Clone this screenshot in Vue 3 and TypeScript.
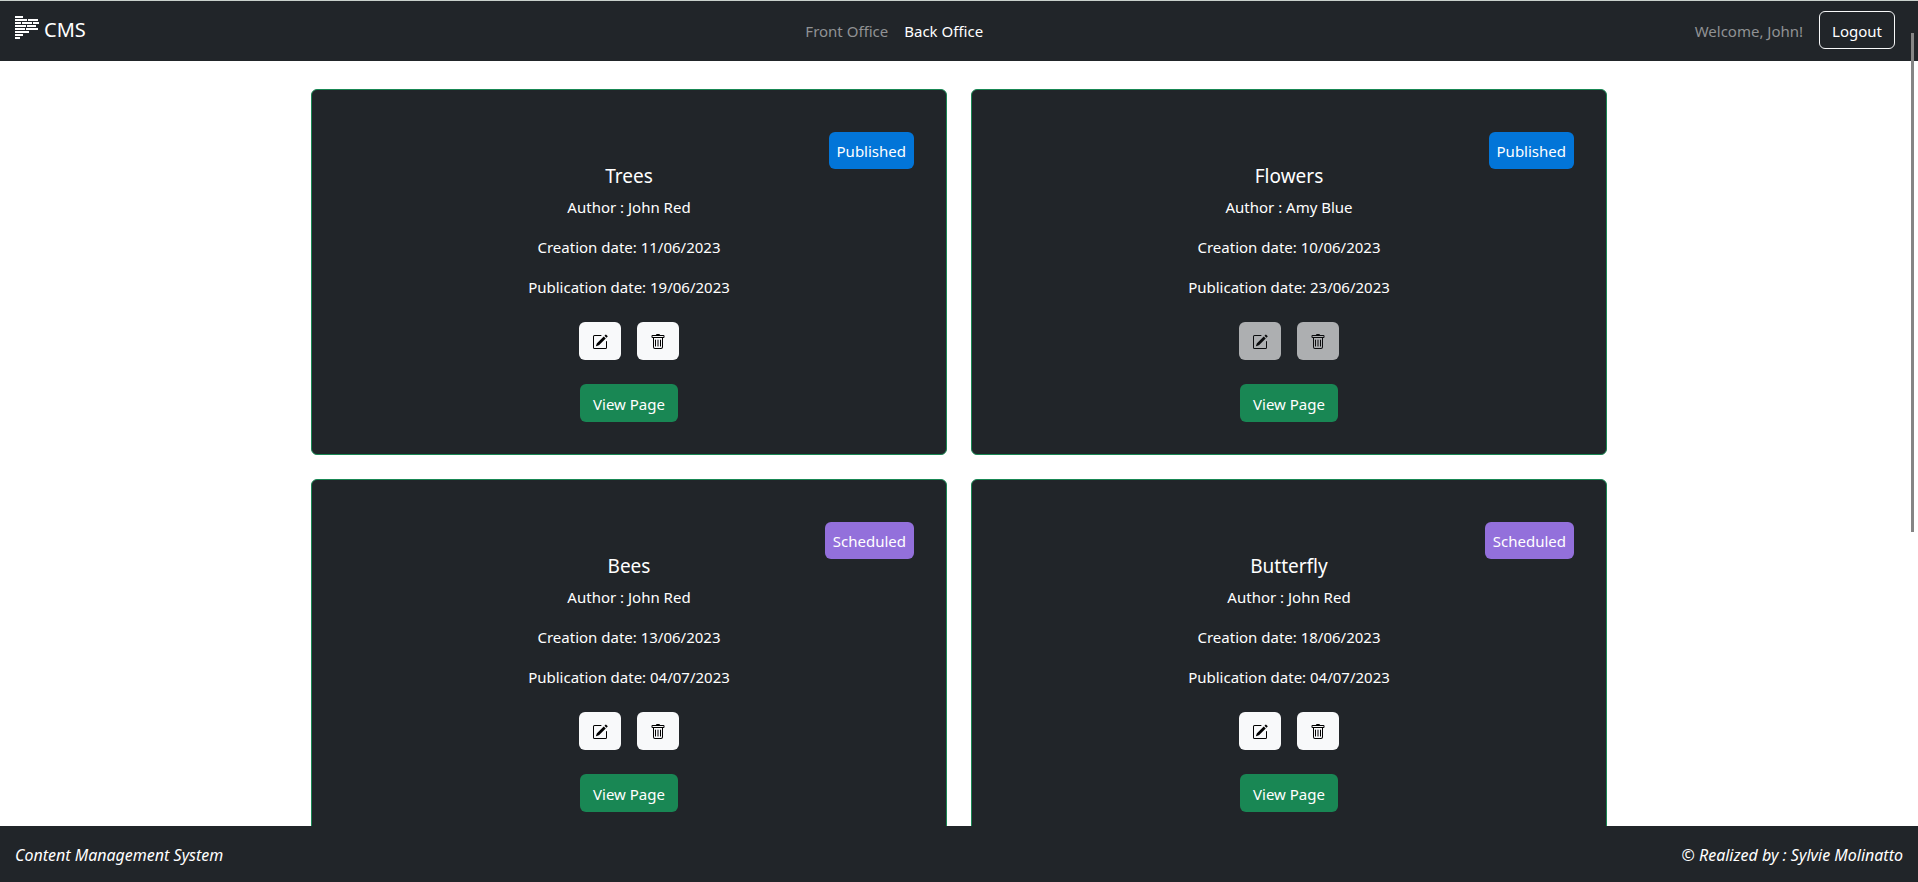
<script setup lang="ts">
interface PageCard {
  title: string
  author: string
  created: string
  published: string
  status: 'Published' | 'Scheduled'
  editable: boolean
}

const pages: PageCard[] = [
  { title: 'Trees', author: 'John Red', created: '11/06/2023', published: '19/06/2023', status: 'Published', editable: true },
  { title: 'Flowers', author: 'Amy Blue', created: '10/06/2023', published: '23/06/2023', status: 'Published', editable: false },
  { title: 'Bees', author: 'John Red', created: '13/06/2023', published: '04/07/2023', status: 'Scheduled', editable: true },
  { title: 'Butterfly', author: 'John Red', created: '18/06/2023', published: '04/07/2023', status: 'Scheduled', editable: true },
]
</script>

<template>
  <div class="app">
    <header class="navbar">
      <a class="brand" href="#">
        <svg class="logo" viewBox="0 0 24 24" aria-hidden="true">
          <path d="M0 0h8v2H0zM0 3h12v2H0zM13 3h10v2H13zM0 6h6v2H0zM7 6h10v2H7zM18 6h6v2h-6zM0 9h11v2H0zM12 9h9v2h-9zM0 12h10v2H0zM11 12h12v2H11zM0 15h14v2H0zM0 18h8v2H0zM0 21h5v2H0z" />
        </svg>
        <span>CMS</span>
      </a>
      <nav class="links">
        <a class="link" href="#front">Front Office</a>
        <a class="link active" href="#back">Back Office</a>
      </nav>
      <div class="user">
        <span class="welcome">Welcome, John!</span>
        <button class="btn logout" type="button">Logout</button>
      </div>
    </header>

    <main class="content">
      <div class="grid">
        <article v-for="page in pages" :key="page.title" class="card">
          <span class="badge" :class="page.status.toLowerCase()">{{ page.status }}</span>
          <h2 class="title">{{ page.title }}</h2>
          <p>Author : {{ page.author }}</p>
          <p>Creation date: {{ page.created }}</p>
          <p>Publication date: {{ page.published }}</p>
          <div class="actions">
            <button class="btn icon-btn" type="button" aria-label="Edit" :disabled="!page.editable">
              <svg viewBox="0 0 16 16" aria-hidden="true">
                <path d="M15.502 1.94a.5.5 0 0 1 0 .706L14.459 3.69l-2-2L13.502.646a.5.5 0 0 1 .707 0l1.293 1.293zm-1.75 2.456-2-2L4.939 9.21a.5.5 0 0 0-.121.196l-.805 2.414a.25.25 0 0 0 .316.316l2.414-.805a.5.5 0 0 0 .196-.12l6.813-6.814z" />
                <path fill-rule="evenodd" d="M1 13.5A1.5 1.5 0 0 0 2.5 15h11a1.5 1.5 0 0 0 1.5-1.5v-6a.5.5 0 0 0-1 0v6a.5.5 0 0 1-.5.5h-11a.5.5 0 0 1-.5-.5v-11a.5.5 0 0 1 .5-.5H9a.5.5 0 0 0 0-1H2.5A1.5 1.5 0 0 0 1 2.5z" />
              </svg>
            </button>
            <button class="btn icon-btn" type="button" aria-label="Delete" :disabled="!page.editable">
              <svg viewBox="0 0 16 16" aria-hidden="true">
                <path d="M5.5 5.5A.5.5 0 0 1 6 6v6a.5.5 0 0 1-1 0V6a.5.5 0 0 1 .5-.5m2.5 0a.5.5 0 0 1 .5.5v6a.5.5 0 0 1-1 0V6a.5.5 0 0 1 .5-.5m3 .5a.5.5 0 0 0-1 0v6a.5.5 0 0 0 1 0z" />
                <path d="M14.5 3a1 1 0 0 1-1 1H13v9a2 2 0 0 1-2 2H5a2 2 0 0 1-2-2V4h-.5a1 1 0 0 1-1-1V2a1 1 0 0 1 1-1H6a1 1 0 0 1 1-1h2a1 1 0 0 1 1 1h3.5a1 1 0 0 1 1 1zM4.118 4 4 4.059V13a1 1 0 0 0 1 1h6a1 1 0 0 0 1-1V4.059L11.882 4zM2.5 3h11V2h-11z" />
              </svg>
            </button>
          </div>
          <button class="btn view" type="button">View Page</button>
        </article>
      </div>
    </main>

    <footer class="footer">
      <em>Content Management System</em>
      <em>© Realized by : Sylvie Molinatto</em>
    </footer>
    <div class="scroll-thumb" aria-hidden="true"></div>
  </div>
</template>

<style>
body {
  margin: 0;
  background: #fff;
}
</style>

<style scoped>
.app {
  position: relative;
  display: flex;
  flex-direction: column;
  height: 100vh;
  box-sizing: border-box;
  border-top: 1px solid #c9d1cc;
  font-family: "Segoe UI", "Noto Sans", sans-serif;
  font-size: 15px;
  line-height: 24px;
  color: #fff;
}

.navbar {
  display: flex;
  align-items: center;
  justify-content: space-between;
  flex: none;
  padding: 10px 23px 12px 15px;
  background: #212529;
}

.brand {
  display: flex;
  align-items: center;
  gap: 5px;
  margin-right: 16px;
  font-size: 20px;
  color: #fff;
  text-decoration: none;
}

.logo {
  width: 24px;
  height: 24px;
  margin-bottom: 4px;
  fill: #fff;
}

.links {
  display: flex;
}

.link {
  padding: 8px 8px 6px;
  color: #909294;
  text-decoration: none;
}

.link.active {
  color: #fff;
}

.user {
  display: flex;
  align-items: center;
  gap: 8px;
}

.welcome {
  padding: 8px 8px 6px;
  color: #909294;
}

.btn {
  box-sizing: border-box;
  height: 38px;
  padding: 1px 12px 0;
  border: 1px solid transparent;
  border-radius: 6px;
  font: inherit;
  color: #fff;
}

.logout {
  border-color: #f8f9fa;
  background: transparent;
}

.content {
  flex: 1;
  min-height: 0;
  overflow-y: auto;
  scrollbar-width: none;
}

.grid {
  display: grid;
  grid-template-columns: 1fr 1fr;
  gap: 24px;
  max-width: 1296px;
  margin: 0 auto;
  padding: 28px 12px 80px;
}

.card {
  position: relative;
  display: flex;
  flex-direction: column;
  align-items: center;
  padding: 74px 32px 32px;
  border: 1px solid #198754;
  border-radius: 6px;
  background: #212529;
}

.badge {
  position: absolute;
  top: 42px;
  right: 32px;
  padding: 7px 8px 6px;
  border-radius: 6px;
}

.published {
  background: #0275d8;
}

.scheduled {
  background: #9370db;
}

.title {
  margin: 0 0 7px;
  font-size: 19px;
  font-weight: 400;
}

.card p {
  margin: 0 0 16px;
}

.actions {
  display: flex;
  gap: 16px;
  margin: 7px 0 24px;
}

.icon-btn {
  display: flex;
  align-items: center;
  background: #f8f9fa;
  color: #000;
}

.icon-btn:disabled {
  opacity: 0.65;
}

.icon-btn svg {
  width: 16px;
  height: 16px;
  fill: currentColor;
}

.view {
  background: #198754;
}

.footer {
  display: flex;
  justify-content: space-between;
  flex: none;
  padding: 17px 15px 15px;
  font-size: 16px;
  background: #212529;
}

.scroll-thumb {
  position: absolute;
  top: 32px;
  right: 4px;
  width: 3px;
  height: 499px;
  background: #858585;
}
</style>
